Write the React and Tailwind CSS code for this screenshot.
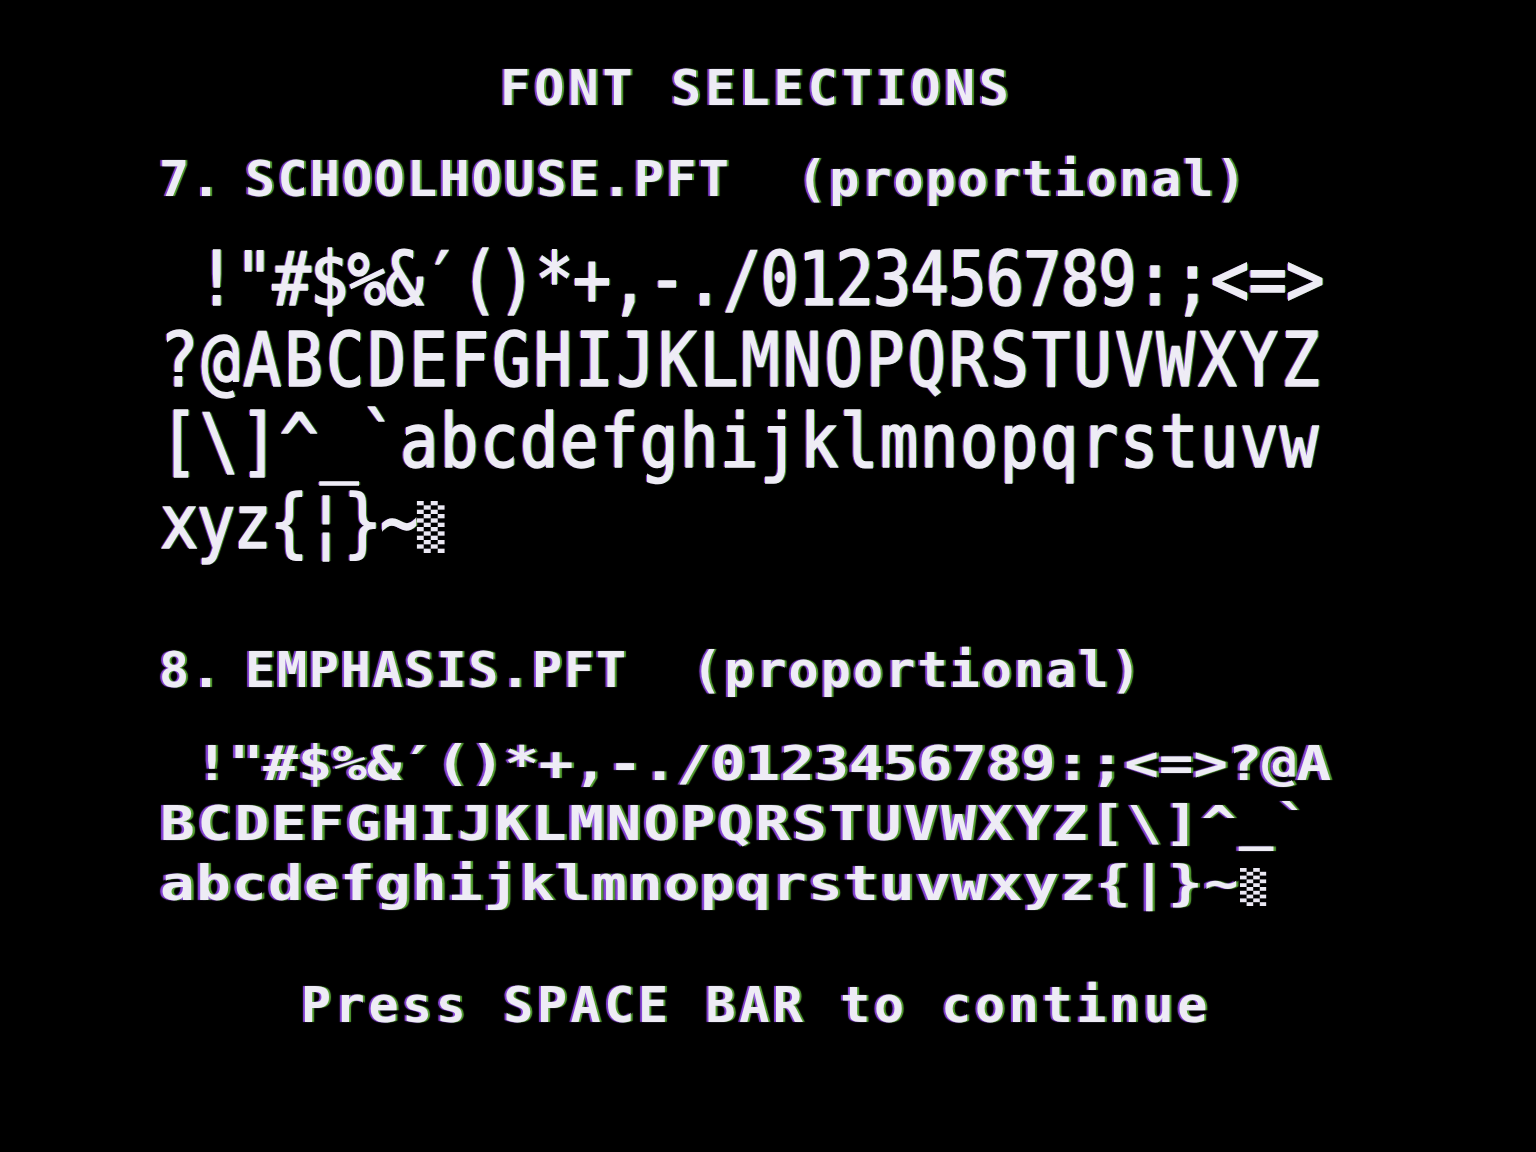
const fringe =
  '[text-shadow:-2px_0_1px_rgba(160,80,255,0.85),2px_0_1px_rgba(120,230,70,0.7)]'

const mono = "font-['DejaVu_Sans_Mono',monospace] font-bold text-[50px]"
const school = "font-['DejaVu_Sans_Mono',monospace] text-[75px] [-webkit-text-stroke:1.5px_#eeecf5]"
const emph = "font-['DejaVu_Sans_Mono',monospace] font-bold text-[48px]"

function Shade({ w, h, cols = 4, rows = 12 }) {
  const cw = w / cols
  const ch = h / rows
  const cells = []
  for (let r = 0; r < rows; r++) {
    for (let c = 0; c < cols; c++) {
      if ((r + c) % 2 === 0) {
        cells.push(<rect key={r + '-' + c} x={c * cw} y={r * ch} width={cw} height={ch} />)
      }
    }
  }
  return (
    <svg width={w} height={h} viewBox={`0 0 ${w} ${h}`} className="inline-block" fill="#ebe8f3">
      {cells}
    </svg>
  )
}

function Header({ num, name, nameWidth, nameTrack }) {
  return (
    <div className={`flex h-[56px] items-baseline leading-[56px] pl-[159px] whitespace-pre ${mono} ${fringe}`}>
      <span className="w-[86px] tracking-[2px]">{num}</span>
      <span className={nameWidth} style={{ letterSpacing: nameTrack }}>{name}</span>
      <span className="tracking-[2.1px]">(proportional)</span>
    </div>
  )
}

function SchoolRow({ text, track, children }) {
  return (
    <div className={`h-[81px] leading-[81px] pl-[160px] whitespace-pre ${school} ${fringe}`}>
      <span className="inline-block origin-left scale-x-[0.85]" style={{ letterSpacing: track }}>
        {text}
        {children}
      </span>
    </div>
  )
}

function EmphRow({ text, track, children }) {
  return (
    <div className={`h-[60px] leading-[60px] pl-[160px] whitespace-pre ${emph} ${fringe}`}>
      <span className="inline-block origin-left scale-x-[1.2]" style={{ letterSpacing: track }}>
        {text}
        {children}
      </span>
    </div>
  )
}

export default function App() {
  return (
    <div className="h-[1152px] bg-black text-[#eeecf5] overflow-hidden">
      <div className="flex flex-col pt-[60px] blur-[0.5px]">
        <div className={`h-[56px] leading-[56px] pl-[500px] whitespace-pre tracking-[4.1px] ${mono} ${fringe}`}>
          FONT SELECTIONS
        </div>

        <div className="mt-[35px]">
          <Header num="7." name="SCHOOLHOUSE.PFT" nameWidth="w-[552px]" nameTrack="2.3px" />
        </div>

        <div className="mt-[32px] flex flex-col">
          <SchoolRow text={' !"#$%&\u2032()*+,-./0123456789:;<=>'} track="-1px" />
          <SchoolRow text="?@ABCDEFGHIJKLMNOPQRSTUVWXYZ" track="3.7px" />
          <SchoolRow text={'[\\]^_`abcdefghijklmnopqrstuvw'} track="1.9px" />
          <SchoolRow text={'xyz{\u00a6}~'} track="-2px">
            <Shade w={33} h={52} />
          </SchoolRow>
        </div>

        <div className="mt-[79px]">
          <Header num="8." name="EMPHASIS.PFT" nameWidth="w-[447px]" nameTrack="1.8px" />
        </div>

        <div className="mt-[35px] flex flex-col">
          <EmphRow text={' !"#$%&\u2032()*+,-./0123456789:;<=>?@A'} track="-0.2px" />
          <EmphRow text={'BCDEFGHIJKLMNOPQRSTUVWXYZ[\\]^_`'} track="2.1px" />
          <EmphRow text="abcdefghijklmnopqrstuvwxyz{|}~" track="1.1px">
            <Shade w={22} h={38} rows={10} />
          </EmphRow>
        </div>

        <div className={`mt-[64px] h-[56px] leading-[56px] pl-[301px] whitespace-pre tracking-[3.6px] ${mono} ${fringe}`}>
          Press SPACE BAR to continue
        </div>
      </div>
    </div>
  )
}
